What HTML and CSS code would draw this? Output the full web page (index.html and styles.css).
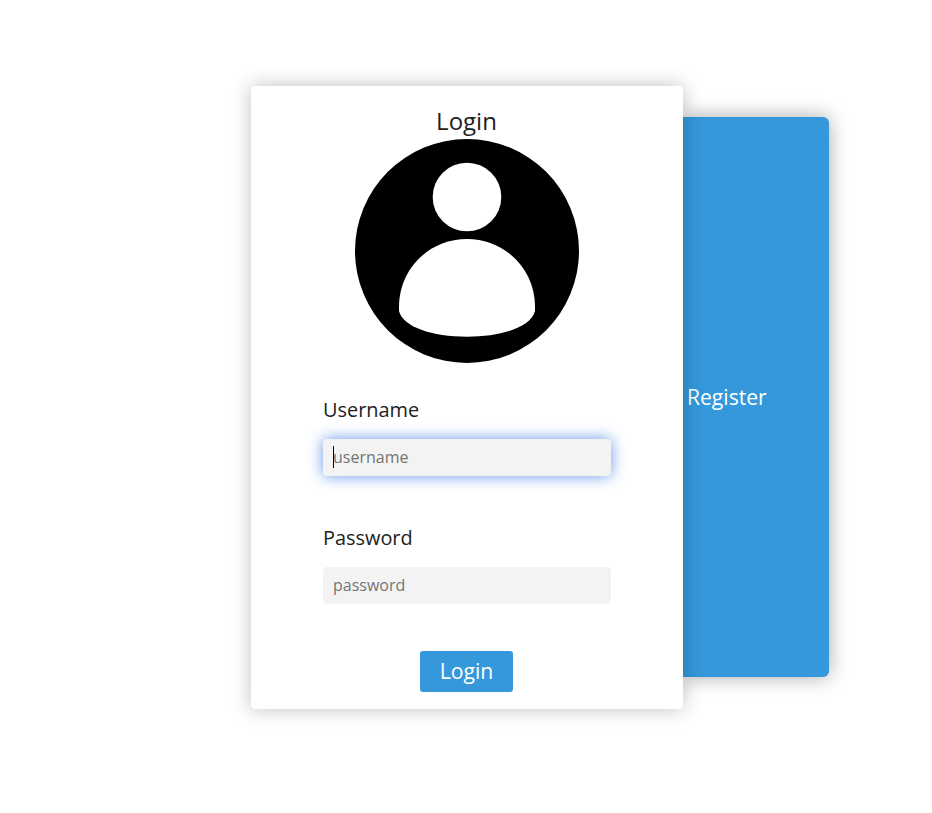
FILE: index.html
```html
<!DOCTYPE html>
<html lang="en">
<head>
<meta charset="utf-8">
<title>Login</title>
<link rel="stylesheet" href="styles.css">
</head>
<body>
<main class="stage">
  <form class="card">
    <h1 class="title">Login</h1>
    <svg class="avatar" viewBox="0 0 224 224" aria-hidden="true">
      <circle cx="112" cy="112" r="112" fill="#000"/>
      <circle cx="112" cy="58" r="34.3" fill="#fff"/>
      <path d="M44 168C44 130 74 100 112 100S180 130 180 168V172C176 188 147 197.7 112 197.7S48 188 44 172Z" fill="#fff"/>
    </svg>
    <div class="field">
      <label class="label" for="username">Username</label>
      <div class="control focused">
        <input class="input" id="username" type="text" placeholder="username">
        <span class="caret"></span>
      </div>
    </div>
    <div class="field">
      <label class="label" for="password">Password</label>
      <div class="control">
        <input class="input" id="password" type="password" placeholder="password">
      </div>
    </div>
    <button class="submit" type="button">Login</button>
  </form>
  <aside class="side">Register</aside>
</main>
</body>
</html>
```
FILE: styles.css
```css
* { box-sizing: border-box; }
body {
  margin: 0;
  background: #fff;
  color: #212121;
  font-family: "Open Sans", sans-serif;
}
.stage {
  display: flex;
  align-items: center;
  height: 813px;
  padding: 0 103px 19px 251px;
}
.card {
  position: relative;
  z-index: 1;
  flex: none;
  display: flex;
  flex-direction: column;
  align-items: center;
  width: 432px;
  height: 623px;
  padding-top: 17px;
  border-radius: 4px;
  background: #fff;
  box-shadow: 0 0 20px rgba(0, 0, 0, .25);
}
.title {
  margin: 0 1px 0 0;
  font-size: 24px;
  font-weight: 400;
  line-height: 36px;
}
.avatar {
  width: 224px;
  height: 224px;
  margin-bottom: 32px;
}
.field {
  width: 288px;
  height: 128px;
}
.label {
  display: block;
  height: 44px;
  font-size: 19.9px;
  line-height: 30px;
}
.control {
  position: relative;
  height: 37px;
  border-radius: 4px;
  background: #f3f3f3;
}
.focused { box-shadow: 0 0 15px #6495ed; }
.input {
  display: block;
  width: 100%;
  height: 37px;
  padding: 0 10px;
  border: 0;
  outline: 0;
  background: transparent;
  color: #212121;
  font: 400 16px "Open Sans", sans-serif;
}
.input::placeholder { color: #757575; }
.caret {
  position: absolute;
  left: 10px;
  top: 7px;
  width: 1px;
  height: 22px;
  background: #000;
}
.submit {
  width: 93px;
  height: 41px;
  margin-right: 2px;
  padding: 0 0 1px 1px;
  border: 0;
  border-radius: 3px;
  background: #3498db;
  color: #fff;
  font: 400 21.2px "Open Sans", sans-serif;
}
.side {
  flex: 1;
  height: 560px;
  padding-left: 4px;
  border-radius: 0 6px 6px 0;
  background: #3498db;
  box-shadow: 0 0 20px rgba(0, 0, 0, .35);
  color: #fff;
  font-size: 21.1px;
  line-height: 559px;
}
```
